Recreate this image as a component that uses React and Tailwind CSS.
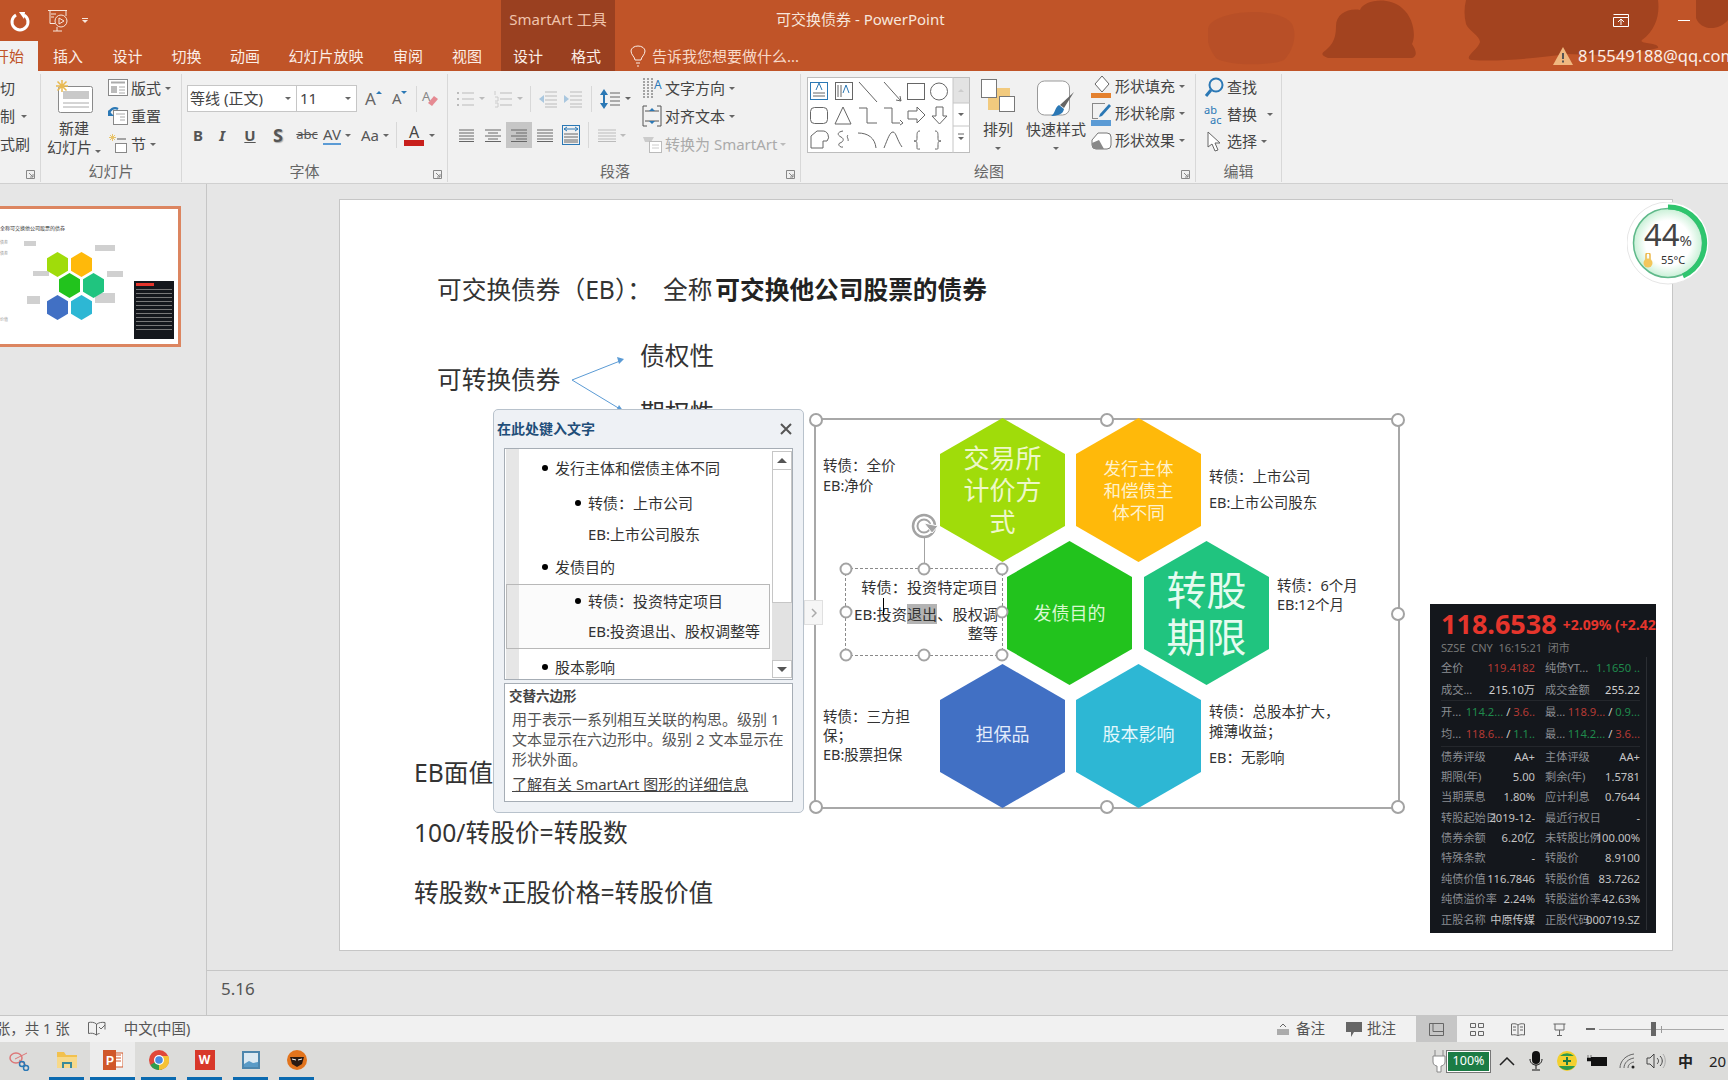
const Caret = ({ className = '' }) => (
  <span className={`inline-block h-0 w-0 border-x-[3px] border-t-[3px] border-x-transparent border-t-[#666] ${className}`} />
)

const Ico = ({ w = 20, h = 20, children, className = '' }) => (
  <svg width={w} height={h} viewBox={`0 0 ${w} ${h}`} fill="none" className={`shrink-0 ${className}`}>
    {children}
  </svg>
)

function Lines({ ys, x1 = 2, x2 = 18, color = '#666' }) {
  return ys.map((y) => <path key={y} d={`M${x1} ${y}H${x2}`} stroke={color} />)
}

function Group({ w, label, launcher, labelPad = '', children }) {
  return (
    <div className={`mt-[3px] h-[108px] shrink-0 border-r border-[#d8d8d8] ${w}`}>
      <div className="flex h-[87px]">{children}</div>
      <div className={`relative flex h-[21px] items-center justify-center text-[15px] text-[#666] ${labelPad}`}>
        {label}
        {launcher && (
          <svg width="9" height="9" viewBox="0 0 9 9" fill="none" className="absolute bottom-[3px] right-[5px]">
            <path d="M.5.5h8v8h-8zM3 3l4 4M7 4v3H4" stroke="#888" />
          </svg>
        )}
      </div>
    </div>
  )
}

const Row = ({ children, className = 'h-[28px]' }) => (
  <div className={`flex items-center whitespace-nowrap text-[15px] text-[#444] ${className}`}>{children}</div>
)

function Ribbon() {
  return (
    <div className="flex h-[113px] shrink-0 border-b border-[#d0d0d0] bg-[#f1f1f1]">
      <Group w="w-[41px] overflow-hidden" launcher label="">
        <div className="-ml-[15px]">
          <Row>剪切</Row>
          <Row>
            复制<Caret className="ml-[6px]" />
          </Row>
          <Row>格式刷</Row>
        </div>
      </Group>

      <Group w="w-[141px]" launcher={false} label="幻灯片">
        <div className="flex w-[62px] flex-col items-center pl-[4px] pt-[6px] text-[15px] leading-[19px] text-[#444]">
          <svg width="38" height="33" viewBox="0 0 38 33" fill="none">
            <rect x="3.5" y="6.5" width="34" height="26" rx="2" fill="#fff" stroke="#8a8a8a" />
            <rect x="8" y="11" width="26" height="8" fill="#c9c9c9" />
            <path d="M8 23h26M8 27h26" stroke="#aaa" />
            <g stroke="#e9b94f" strokeWidth="1.5">
              <path d="M7 0v12M1 6h12M2.5 1.5l9 9M11.5 1.5l-9 9" />
            </g>
          </svg>
          <div className="mt-[6px]">新建</div>
          <div className="whitespace-nowrap">
            幻灯片<Caret className="ml-[3px]" />
          </div>
        </div>
        <div className="pl-[5px]">
          <Row>
            <Ico w={20} h={20} className="mr-[3px]">
              <rect x=".5" y="1.5" width="19" height="16" fill="#fff" stroke="#888" />
              <path d="M3 4.5h14" stroke="#aaa" strokeWidth="2" />
              <rect x="3" y="8" width="6" height="7" fill="#bbb" />
              <path d="M11 9h6M11 12h6M11 15h6" stroke="#aaa" />
            </Ico>
            版式<Caret className="ml-[4px]" />
          </Row>
          <Row>
            <Ico w={20} h={20} className="mr-[3px]">
              <rect x="5.5" y="4.5" width="14" height="14" fill="#fff" stroke="#888" />
              <path d="M8 8h9M12 11h5M12 14h5" stroke="#aaa" />
              <path d="M1 8a6 6 0 0 1 9-5" stroke="#2b78b5" strokeWidth="2.4" />
              <path d="M0 4v6h6z" fill="#2b78b5" />
            </Ico>
            重置
          </Row>
          <Row>
            <Ico w={20} h={20} className="mr-[3px]">
              <path d="M2 1l5 5M7 1L2 6M4.5 0v7M1 3.500h7" stroke="#e9c46a" />
              <path d="M9 5h9" stroke="#888" strokeWidth="1.5" />
              <rect x="7.500" y="9.500" width="11" height="9" fill="#fff" stroke="#888" />
            </Ico>
            节<Caret className="ml-[4px]" />
          </Row>
        </div>
      </Group>

      <Group w="w-[266px]" launcher label="字体" labelPad="pr-[20px]">
        <div className="pl-[5px] pt-[11px]">
          <div className="flex h-[27px] items-center">
            <div className="flex h-full w-[110px] items-center justify-between border border-[#c6c6c6] bg-white pl-[2px] pr-[5px] text-[15px] text-[#444]">
              等线 (正文)
              <Caret />
            </div>
            <div className="flex h-full w-[60px] items-center justify-between border border-l-0 border-[#c6c6c6] bg-white pl-[3px] pr-[5px] text-[15px] text-[#444]">
              11
              <Caret />
            </div>
            <span className="ml-[8px] text-[17px] leading-none text-[#666]">A</span>
            <span className="-mt-[12px] border-x-[3px] border-b-[3px] border-x-transparent border-b-[#2b78b5]" />
            <span className="ml-[10px] text-[15px] leading-none text-[#666]">A</span>
            <span className="-mt-[12px] border-x-[3px] border-t-[3px] border-x-transparent border-t-[#2b78b5]" />
            <span className="ml-[9px] h-[26px] w-px bg-[#d8d8d8]" />
            <Ico w={18} h={22} className="ml-[4px]">
              <text x="1" y="13" fontSize="13" fill="#888">A</text>
              <path d="M7 15l6-7 4 3-6 7z" fill="#e58a92" />
            </Ico>
          </div>
          <div className="mt-[10px] flex h-[26px] items-center text-[#555]">
            <span className="w-[22px] text-center text-[15px] font-bold">B</span>
            <span className="w-[26px] text-center text-[15px] font-bold italic">I</span>
            <span className="w-[30px] text-center text-[15px] font-bold underline">U</span>
            <span className="w-[26px] text-center text-[18px] font-bold [text-shadow:1px_1px_1px_#aaa]">S</span>
            <span className="w-[32px] text-center text-[13px] line-through">abc</span>
            <span className="flex w-[37px] items-center">
              <span className="border-b-2 border-[#5b9bd5] text-[15px] leading-[17px]">AV</span>
              <Caret className="ml-[4px]" />
            </span>
            <span className="flex w-[36px] items-center pl-[1px] text-[15px]">
              Aa
              <Caret className="ml-[4px]" />
            </span>
            <span className="h-[26px] w-px bg-[#d8d8d8]" />
            <span className="ml-[7px] flex w-[20px] flex-col items-center">
              <span className="text-[16px] leading-[16px] text-[#444]">A</span>
              <span className="h-[6px] w-[20px] bg-[#c8201c]" />
            </span>
            <Caret className="ml-[5px]" />
          </div>
        </div>
      </Group>

      <Group w="w-[353px]" launcher label="段落" labelPad="pr-[18px]">
        <div className="w-[186px] pl-[8px] pt-[11px]">
          <div className="flex h-[27px] items-center">
            <Ico w={18} h={18}>
              <Lines ys={[3, 9, 15]} x1={6} x2={18} color="#bbb" />
              <path d="M1 3h2M1 9h2M1 15h2" stroke="#bbb" strokeWidth="2" />
            </Ico>
            <Caret className="ml-[5px] border-t-[#bbb]" />
            <Ico w={18} h={18} className="ml-[9px]">
              <Lines ys={[3, 9, 15]} x1={6} x2={18} color="#bbb" />
              <path d="M1 1v4M1 7h3v4H1M1 13h3v4H1" stroke="#ccc" />
            </Ico>
            <Caret className="ml-[5px] border-t-[#bbb]" />
            <span className="ml-[7px] h-[26px] w-px bg-[#d8d8d8]" />
            <Ico w={20} h={18} className="ml-[7px]">
              <Lines ys={[2, 6, 10, 14, 17]} x1={7} x2={19} color="#bbb" />
              <path d="M1 9l5-4v8z" fill="#a9c7df" />
            </Ico>
            <Ico w={20} h={18} className="ml-[5px]">
              <Lines ys={[2, 6, 10, 14, 17]} x1={7} x2={19} color="#bbb" />
              <path d="M6 9L1 5v8z" fill="#a9c7df" />
            </Ico>
            <span className="ml-[8px] h-[26px] w-px bg-[#d8d8d8]" />
            <Ico w={20} h={20} className="ml-[8px]">
              <path d="M4 2v16" stroke="#2b78b5" strokeWidth="2" />
              <path d="M4 0l4 6H0zM4 20l4-6H0z" fill="#2b78b5" />
              <Lines ys={[4, 8, 12, 16]} x1={10} x2={20} color="#666" />
            </Ico>
            <Caret className="ml-[5px]" />
          </div>
          <div className="-ml-[2px] mt-[10px] flex h-[26px] items-center">
            <div className="flex w-[26px] justify-center">
              <Ico w={16} h={13}><Lines ys={[1, 4, 7, 10, 12.500]} x1={0} x2={15} /></Ico>
            </div>
            <div className="flex w-[26px] justify-center">
              <Ico w={16} h={13}><Lines ys={[1, 7, 12.500]} x1={0} x2={16} /><Lines ys={[4, 10]} x1={3} x2={13} /></Ico>
            </div>
            <div className="flex h-[26px] w-[26px] items-center justify-center bg-[#c6c6c6]">
              <Ico w={16} h={13}><Lines ys={[1, 7, 12.500]} x1={0} x2={16} /><Lines ys={[4, 10]} x1={5} x2={16} /></Ico>
            </div>
            <div className="flex w-[26px] justify-center">
              <Ico w={16} h={13}><Lines ys={[1, 4, 7, 10, 12.500]} x1={0} x2={16} /></Ico>
            </div>
            <div className="flex w-[26px] justify-center">
              <Ico w={18} h={20}>
                <rect x=".5" y=".5" width="17" height="19" stroke="#2b78b5" />
                <path d="M2 4h14M5 2L2 4l3 2M13 2l3 2-3 2" stroke="#2b78b5" />
                <Lines ys={[9, 12, 15, 17]} x1={2} x2={16} />
              </Ico>
            </div>
            <span className="ml-[4px] h-[26px] w-px bg-[#d8d8d8]" />
            <Ico w={18} h={13} className="ml-[9px]"><Lines ys={[1, 4, 7, 10, 12.500]} x1={0} x2={18} color="#bbb" /></Ico>
            <Caret className="ml-[4px] border-t-[#bbb]" />
          </div>
        </div>
        <div className="pl-[8px]">
          <Row>
            <Ico w={20} h={24} className="mr-[3px]">
              <path d="M2 2v20M6 2v20M10 2v20" stroke="#555" strokeDasharray="2 1" />
              <text x="12" y="13" fontSize="12" fill="#2b78b5">A</text>
            </Ico>
            文字方向<Caret className="ml-[4px]" />
          </Row>
          <Row>
            <Ico w={20} h={22} className="mr-[3px]">
              <path d="M5 1H1v20h4M15 1h4v20h-4M3 6h14M3 16h14" stroke="#555" />
              <path d="M10 3l3 3H7zM10 19l3-3H7z" fill="#2b78b5" />
            </Ico>
            对齐文本<Caret className="ml-[4px]" />
          </Row>
          <Row className="h-[28px] text-[#aaa]!">
            <Ico w={20} h={18} className="mr-[3px]">
              <path d="M1 2h11l-3 5H3z" fill="#ccc" />
              <rect x="7.500" y="6.500" width="12" height="11" fill="#fff" stroke="#bbb" />
              <path d="M10 10h7M10 13h7" stroke="#ccc" />
            </Ico>
            转换为 SmartArt<Caret className="ml-[3px] border-t-[#bbb]" />
          </Row>
        </div>
      </Group>

      <Group w="w-[395px]" launcher label="绘图" labelPad="pr-[18px]">
        <div className="flex pl-[6px] pt-[3px]">
          <svg width="163" height="76" viewBox="0 0 163 76" fill="none" className="shrink-0">
            <rect x=".5" y=".5" width="162" height="75" fill="#fff" stroke="#bdbdbd" />
            <rect x="146" y="1" width="16" height="25" fill="#e3e3e3" />
            <path d="M146 0v76M146 26h17M146 49h17" stroke="#c6c6c6" />
            <path d="M154 12l3 3h-6z" fill="#ccc" />
            <path d="M151 36h6l-3 3zM151 60h6l-3 3z" fill="#666" />
            <path d="M151 57h6" stroke="#666" />
            <g stroke="#666">
              <rect x="3.500" y="5.500" width="17" height="17" stroke="#2b78b5" />
              <path d="M6 16h12M6 19h12" />
              <path d="M9 13l3-7 3 7" stroke="#2b78b5" />
              <rect x="28.500" y="5.500" width="17" height="17" />
              <path d="M31 8v12M34 8v12" />
              <path d="M36 16l3-8 3 8" stroke="#2b78b5" />
              <path d="M52 5l18 20M77 5l17 19" />
              <path d="M94 24l-5-1M94 24l-1-5" />
              <rect x="100.500" y="6.500" width="17" height="16" />
              <circle cx="132" cy="14.500" r="8.500" />
              <rect x="3.500" y="30.500" width="17" height="16" rx="4" />
              <path d="M28 47l8-17 8 17z" />
              <path d="M52 31h8v15h10M77 31h8v15h8M93 43l3 3-3 2" />
              <path d="M101 34h9v-4l8 8-8 8v-4h-9zM129 30h7v9h4l-7.500 8-7.500-8h4z" />
              <path d="M4 71V59l6-5h5a6 6 0 0 1 5 10h-4v7z" />
              <path d="M36 54c-6 1-6 4-2 6s2 5-1 6 0 5 3 4M41 58c-2 2 1 4 0 6" />
              <path d="M51 56c10 0 17 5 18 15M77 71c4-10 6-16 9-16s4 8 9 15" />
              <path d="M113 54c-3 0-3 2-3 6s0 4-3 4c3 0 3 1 3 5s0 3 3 3M128 54c3 0 3 2 3 6s0 4 3 4c-3 0-3 1-3 5s0 3-3 3" />
            </g>
          </svg>
          <div className="flex w-[56px] flex-col items-center pt-[1px] text-[15px] leading-[19px] text-[#444]">
            <svg width="36" height="36" viewBox="0 0 36 36" fill="none">
              <rect x="8" y="10" width="22" height="22" fill="#f2ca7e" />
              <rect x="1.500" y="1.500" width="15" height="18" fill="#fff" stroke="#777" />
              <rect x="19.500" y="18.500" width="15" height="15" fill="#fff" stroke="#777" />
            </svg>
            <div className="mt-[6px]">排列</div>
            <Caret className="mt-[8px]" />
          </div>
          <div className="flex w-[60px] flex-col items-center pt-[3px] text-[15px] leading-[19px] text-[#444]">
            <svg width="40" height="38" viewBox="0 0 40 38" fill="none">
              <rect x="1.500" y="1" width="32" height="34" rx="7" fill="#fff" stroke="#999" />
              <path d="M38 12l-10 16-4-3z" fill="#666" />
              <path d="M23 25l5 4c-1 6-8 7-13 7 4-2 4-9 8-11z" fill="#2b78b5" />
            </svg>
            <div className="mt-[2px] whitespace-nowrap">快速样式</div>
            <Caret className="mt-[8px]" />
          </div>
          <div className="-mt-[4px] pl-[5px]">
            <Row className="h-[27px]">
              <Ico w={21} h={24} className="mr-[3px]">
                <path d="M11 1l7 8-7 8-7-8z" fill="#fff" stroke="#666" />
                <rect x="0" y="18" width="20" height="5" fill="#e4812f" />
              </Ico>
              形状填充<Caret className="ml-[4px]" />
            </Row>
            <Row className="h-[27px]">
              <Ico w={21} h={24} className="mr-[3px]">
                <path d="M1 1.500h13M1.500 1v16M1 16.500h6" stroke="#888" />
                <path d="M18 2l2 2-9 10-3 1 1-3z" fill="#2b78b5" />
                <rect x="0" y="18" width="20" height="6" fill="#5b9bd5" />
              </Ico>
              形状轮廓<Caret className="ml-[4px]" />
            </Row>
            <Row className="h-[27px]">
              <Ico w={21} h={20} className="mr-[3px]">
                <path d="M7 2h9a4 4 0 0 1 4 4v8a4 4 0 0 1-4 4H5a4 4 0 0 1-4-4V9z" fill="#fff" stroke="#777" />
                <path d="M1 12l7-3 5 9H5c-3 0-4-2-4-6z" fill="#888" />
              </Ico>
              形状效果<Caret className="ml-[4px]" />
            </Row>
          </div>
        </div>
      </Group>

      <Group w="w-[86px]" label="编辑">
        <div className="pl-[8px]">
          <Row className="h-[27px]">
            <Ico w={20} h={22} className="mr-[3px]">
              <circle cx="12" cy="8" r="6.500" stroke="#2b78b5" strokeWidth="2" />
              <path d="M7 13l-5 6" stroke="#2b78b5" strokeWidth="3" />
            </Ico>
            查找
          </Row>
          <Row className="h-[27px]">
            <span className="mr-[4px] w-[19px] text-[11px] leading-[10px] text-[#2b78b5]">
              ab
              <br />
              <span className="pl-[6px]">ac</span>
            </span>
            替换<Caret className="ml-[10px]" />
          </Row>
          <Row className="h-[27px]">
            <Ico w={20} h={22} className="mr-[3px]">
              <path d="M4 1v15l4-3 3 7 3-1-3-7h5z" fill="#fff" stroke="#666" />
            </Ico>
            选择<Caret className="ml-[4px]" />
          </Row>
        </div>
      </Group>
    </div>
  )
}

function Header() {
  const tabs = [
    ['插入', 'w-[60px]'],
    ['设计', 'w-[59px]'],
    ['切换', 'w-[59px]'],
    ['动画', 'w-[58px]'],
    ['幻灯片放映', 'w-[104px]'],
    ['审阅', 'w-[60px]'],
    ['视图', 'w-[63px] pr-[5px]'],
  ]
  return (
    <div className="relative h-[71px] shrink-0 overflow-hidden bg-[#c05428] text-white">
      <svg width="520" height="71" viewBox="0 0 520 71" className="absolute right-0 top-0" fill="#a3431f">
        <path d="M0 20c12-14 70-18 82 0 6 12 0 28-8 36-12 6-58 6-68-2C-2 44-6 30 0 20z" fill="#b34c26" opacity=".6" transform="translate(2 4)" />
        <path d="M128 26c0-12 12-18 24-16 4-10 28-14 42-2 12 10 14 28 10 36 4 6 6 12 0 14H120c-6-2-8-4-2-8 4-4 10-8 10-24z" />
        <path d="M258 0h192c2 14-2 30-16 40-4 4 18 2 16 8-20 6-60 8-90 6-30 4-70 8-96 6-10-2 6-10 8-18 0-6-12-12-14-18-2-8-2-16 0-24z" />
        <path d="M488 0h32v20c-10 12-28 10-32-2z" />
      </svg>
      <div className="relative flex h-[41px] items-center">
        <div className="flex h-full w-[501px] items-center">
          <svg width="22" height="22" viewBox="0 0 22 22" fill="none" className="ml-[9px]">
            <path d="M7 5a8 8 0 1 0 8 0" stroke="#fff" strokeWidth="3" />
            <path d="M10 2l6 0-1 7z" fill="#fff" />
          </svg>
          <svg width="22" height="24" viewBox="0 0 22 24" fill="none" stroke="#f7e6dc" className="ml-[16px]">
            <path d="M1 1.500h19M3 1.500v13h5M19 1.500V7M4 5h5M4 8h3" />
            <circle cx="14" cy="12" r="6" />
            <path d="M12 9l5 3-5 3zM6 22h9M10 18v4" />
          </svg>
          <span className="ml-[13px] flex flex-col items-center gap-[1px]">
            <span className="h-px w-[6px] bg-[#f7e6dc]" />
            <Caret className="border-t-[#f7e6dc]" />
          </span>
        </div>
        <div className="flex h-full w-[114px] items-center justify-center bg-[#9a4020] pb-[2px] text-[15px] text-[#f0c4ac]">
          SmartArt 工具
        </div>
        <div className="pb-[2px] pl-[161px] text-[15px] text-[#f7e6dc]">可交换债券 - PowerPoint</div>
        <div className="ml-auto flex items-center pr-[38px]">
          <svg width="16" height="13" viewBox="0 0 16 13" fill="none" stroke="#fff">
            <path d="M.5 3.500h15v9H.5zM.5.500h15v3M8 11V5M5 8l3-3 3 3" />
          </svg>
          <span className="ml-[49px] h-px w-[12px] bg-white" />
        </div>
      </div>
      <div className="relative flex h-[30px] items-center text-[15px]">
        <div className="flex h-full w-[38px] items-center justify-end overflow-hidden whitespace-nowrap bg-[#f1f1f1] pr-[14px] text-[#c05428]">
          开始
        </div>
        {tabs.map(([t, w]) => (
          <div key={t} className={`flex h-full items-center justify-center text-[#fbeee7] ${w}`}>
            {t}
          </div>
        ))}
        <div className="flex h-full w-[114px] items-center bg-[#9a4020] pl-[12px] text-[#fbeee7]">
          <span>设计</span>
          <span className="ml-[28px]">格式</span>
        </div>
        <svg width="16" height="22" viewBox="0 0 16 22" fill="none" stroke="#fbeee7" className="ml-[15px]">
          <path d="M5 15c0-3-4-5-4-9a7 5 0 0 1 14 0c0 4-4 6-4 9zM6 18h4M7 21h2" />
        </svg>
        <span className="ml-[6px] text-[#f7d9c9]">告诉我您想要做什么...</span>
        <div className="ml-auto flex items-center">
          <svg width="20" height="18" viewBox="0 0 20 18">
            <path d="M10 0l10 18H0z" fill="#f0b880" />
            <path d="M10 6v6M10 13.500v2" stroke="#555" strokeWidth="2" />
          </svg>
          <span className="ml-[5px] w-[150px] overflow-hidden whitespace-nowrap text-[16.5px] text-[#fbeee7]">815549188@qq.com</span>
        </div>
      </div>
    </div>
  )
}

function Hex({ pos, color, lines, text }) {
  return (
    <div
      className={`absolute flex h-[144px] w-[125px] flex-col items-center justify-center text-center [clip-path:polygon(50%_0,100%_25%,100%_75%,50%_100%,0_75%,0_25%)] ${pos} ${color} ${text}`}
    >
      {lines.map((l) => (
        <div key={l} className="whitespace-nowrap">
          {l}
        </div>
      ))}
    </div>
  )
}

const Handle = ({ pos, size = 'h-[14px] w-[14px]' }) => (
  <span className={`absolute -translate-x-1/2 -translate-y-1/2 rounded-full border-2 border-[#a3a3a3] bg-white ${size} ${pos}`} />
)

function SmartArt() {
  const side = 'absolute whitespace-nowrap text-[14.5px] text-[#333]'
  const small = 'h-[13px] w-[13px]'
  return (
    <div className="absolute left-[474px] top-[218px] h-[391px] w-[586px] border-2 border-[#a8a8a8]">
      <Hex pos="left-[124px] -top-[2px]" color="bg-[#a0dc0a]" lines={['交易所', '计价方', '式']} text="text-[26px] leading-[32px] text-[#eef8c8]" />
      <Hex pos="left-[260px] -top-[2px]" color="bg-[#ffb90a]" lines={['发行主体', '和偿债主', '体不同']} text="text-[17.500px] leading-[22px] text-[#fff2cc]" />
      <Hex pos="left-[191px] top-[121px]" color="bg-[#22c31d]" lines={['发债目的']} text="text-[18px] text-[#d8f8d0]" />
      <Hex pos="left-[328px] top-[121px]" color="bg-[#20c47f]" lines={['转股', '期限']} text="text-[40px] leading-[47px] text-[#e6fbf0]" />
      <Hex pos="left-[124px] top-[244px]" color="bg-[#4170c4]" lines={['担保品']} text="pb-[3px] text-[18px] text-[#e3ecfb]" />
      <Hex pos="left-[260px] top-[244px]" color="bg-[#2db7d4]" lines={['股本影响']} text="pb-[3px] text-[18px] text-[#e3f8fc]" />

      <div className={`left-[7px] top-[35px] leading-[20px] ${side}`}>
        转债：全价
        <br />
        EB:净价
      </div>
      <div className={`left-[393px] top-[43px] leading-[26px] ${side}`}>
        转债：上市公司
        <br />
        EB:上市公司股东
      </div>
      <div className={`left-[461px] top-[156px] leading-[19px] ${side}`}>
        转债：6个月
        <br />
        EB:12个月
      </div>
      <div className={`left-[7px] top-[287px] leading-[19px] ${side}`}>
        转债：三方担
        <br />
        保；
        <br />
        EB:股票担保
      </div>
      <div className={`left-[393px] top-[282px] leading-[19.500px] ${side}`}>
        转债：总股本扩大，
        <br />
        摊薄收益；
        <div className="mt-[7px]">EB：无影响</div>
      </div>

      <div className="absolute left-[29px] top-[148px] h-[88px] w-[158px] border border-dashed border-[#8a8a8a]">
        <div className="pr-[4px] pt-[8px] text-right text-[15.200px] leading-[20px] text-[#333]">
          <div className="whitespace-nowrap">转债：投资特定项目</div>
          <div className="mt-[7px] whitespace-nowrap">
            EB:投资<span className="bg-[#b3b3b3]">退出</span>、股权调
          </div>
          <div className="leading-[19px]">整等</div>
        </div>
        <span className="absolute left-[37px] top-[29px] h-[17px] w-px bg-black" />
        <span className="absolute -top-[33px] left-1/2 h-[33px] w-px bg-[#a3a3a3]" />
        <svg width="30" height="28" viewBox="0 0 30 28" fill="none" className="absolute -top-[57px] left-[64px]">
          <circle cx="14" cy="14" r="11" stroke="#a3a3a3" strokeWidth="2.500" />
          <circle cx="14" cy="14" r="6.500" stroke="#a3a3a3" strokeWidth="2" />
          <path d="M14 11l14 3-6 7z" fill="#a3a3a3" stroke="#fff" />
        </svg>
        <Handle size={small} pos="left-0 top-0" />
        <Handle size={small} pos="left-1/2 top-0" />
        <Handle size={small} pos="left-full top-0" />
        <Handle size={small} pos="left-0 top-1/2" />
        <Handle size={small} pos="left-full top-1/2" />
        <Handle size={small} pos="left-0 top-full" />
        <Handle size={small} pos="left-1/2 top-full" />
        <Handle size={small} pos="left-full top-full" />
      </div>

      <Handle pos="left-0 top-0" />
      <Handle pos="left-1/2 top-0" />
      <Handle pos="left-full top-0" />
      <Handle pos="left-0 top-1/2" />
      <Handle pos="left-full top-1/2" />
      <Handle pos="left-0 top-full" />
      <Handle pos="left-1/2 top-full" />
      <Handle pos="left-full top-full" />
    </div>
  )
}

function PaneRow({ level, children, className = '' }) {
  return (
    <div className={`flex h-[30px] shrink-0 items-center whitespace-nowrap text-[15px] text-[#333] ${level === 1 ? 'pl-[23px]' : 'pl-[56px]'} ${className}`}>
      <span className="mr-[7px] h-[6px] w-[6px] rounded-full bg-black" />
      {children}
    </div>
  )
}

function TextPane() {
  return (
    <div className="absolute left-[153px] top-[209px] h-[404px] w-[311px] rounded-[5px] border border-[#b8c2cc] bg-[#eef1f5]">
      <div className="flex h-[38px] items-center justify-between pb-[1px] pl-[3px] pr-[11px]">
        <span className="text-[14px] font-bold text-[#1f4e79]">在此处键入文字</span>
        <svg width="12" height="12" viewBox="0 0 12 12" stroke="#555" strokeWidth="2">
          <path d="M1 1l10 10M11 1L1 11" />
        </svg>
      </div>
      <div className="mx-[10px] flex h-[232px] overflow-hidden border border-[#a6adb5] bg-white">
        <div className="h-full w-[267px] shrink-0 overflow-hidden pl-[1px]">
          <div className="h-full border-l-[13px] border-[#e6e6e6] pt-[4px]">
            <PaneRow level={1}>发行主体和偿债主体不同</PaneRow>
            <PaneRow level={2} className="mt-[5px]">转债：上市公司</PaneRow>
            <div className="mt-[1px] flex h-[30px] items-center pl-[69px] text-[15px] text-[#333]">EB:上市公司股东</div>
            <PaneRow level={1} className="mt-[3px]">发债目的</PaneRow>
            <div className="-ml-[13px] mt-[2px] h-[65px] w-[264px] border border-[#b8b8b8]">
              <div className="h-full border-l-[12px] border-[#e6e6e6] bg-[#fbfbfb] pt-[1px]">
                <PaneRow level={2}>转债：投资特定项目</PaneRow>
                <div className="flex h-[30px] items-center whitespace-nowrap pl-[69px] text-[15px] text-[#333]">EB:投资退出、股权调整等</div>
              </div>
            </div>
            <PaneRow level={1} className="mt-[3px]">股本影响</PaneRow>
          </div>
        </div>
        <div className="mt-[2px] flex h-[227px] w-[20px] flex-col">
          <div className="flex h-[19px] items-center justify-center border border-[#c6c6c6]">
            <span className="border-x-[5px] border-b-[5px] border-x-transparent border-b-[#555]" />
          </div>
          <div className="h-[133px] border border-t-0 border-[#c6c6c6]" />
          <div className="flex-1 bg-[#e2e2e2]" />
          <div className="flex h-[18px] items-center justify-center border border-[#c6c6c6]">
            <span className="border-x-[5px] border-t-[5px] border-x-transparent border-t-[#555]" />
          </div>
        </div>
      </div>
      <div className="mx-[10px] mt-[3px] h-[119px] whitespace-nowrap border border-[#a6adb5] bg-white pl-[4px] pt-[3px]">
        <div className="text-[13.500px] font-bold leading-[19px] text-[#444]">交替六边形</div>
        <div className="mt-[3px] pl-[3px] text-[15px] leading-[20px] text-[#555]">
          用于表示一系列相互关联的构思。级别 1
          <br />
          文本显示在六边形中。级别 2 文本显示在
          <br />
          形状外面。
        </div>
        <div className="mt-[5px] pl-[3px] text-[15px] leading-[20px] text-[#444] underline">了解有关 SmartArt 图形的详细信息</div>
      </div>
    </div>
  )
}

const R = 'text-[#b53a34]'
const G = 'text-[#1f8a4c]'
const stockRows = [
  ['全价', [['119.4182', R]], '纯债YT...', [['1.1650 ..', G]]],
  ['成交...', [['215.10万', 'text-[#d0d0d0]']], '成交金额', [['255.22', 'text-[#d0d0d0]']]],
  ['开...', [['114.2...', G], [' / ', 'text-[#ccc]'], ['3.6..', R]], '最...', [['118.9...', R], [' / ', 'text-[#ccc]'], ['0.9...', G]]],
  ['均...', [['118.6...', R], [' / ', 'text-[#ccc]'], ['1.1..', G]], '最...', [['114.2...', G], [' / ', 'text-[#ccc]'], ['3.6...', R]]],
  ['债券评级', 'AA+', '主体评级', 'AA+'],
  ['期限(年)', '5.00', '剩余(年)', '1.5781'],
  ['当期票息', '1.80%', '应计利息', '0.7644'],
  ['转股起始日', '2019-12-', '最近行权日', '-'],
  ['债券余额', '6.20亿', '未转股比例', '100.00%'],
  ['特殊条款', '-', '转股价', '8.9100'],
  ['纯债价值', '116.7846', '转股价值', '83.7262'],
  ['纯债溢价率', '2.24%', '转股溢价率', '42.63%'],
  ['正股名称', '中原传媒', '正股代码', '000719.SZ'],
]

function StockValue({ v }) {
  if (typeof v === 'string') return <span className="shrink-0 text-[#c4c4c4]">{v}</span>
  return (
    <span className="shrink-0 whitespace-pre">
      {v.map(([t, c], i) => (
        <span key={i} className={c}>
          {t}
        </span>
      ))}
    </span>
  )
}

function StockCard() {
  return (
    <div className="absolute left-[1090px] top-[404px] h-[329px] w-[226px] overflow-hidden bg-[#14171c] pl-[11px] pt-[5px]">
      <div className="flex h-[30px] items-center whitespace-nowrap font-bold text-[#e5352c]">
        <span className="text-[27px]">118.6538</span>
        <span className="ml-[6px] text-[14px]">+2.09% (+2.42</span>
      </div>
      <div className="mt-[2px] h-[14px] whitespace-nowrap text-[11px] leading-[14px] text-[#777]">SZSE&nbsp; CNY&nbsp; 16:15:21&nbsp; 闭市</div>
      <div className="mt-[2px] w-[206px] border-r border-[#2b2e33] pr-[6px]">
        {stockRows.map(([a, av, b, bv], i) => (
          <div
            key={a + i}
            className={`grid grid-cols-[94px_95px] gap-x-[10px] whitespace-nowrap text-[11.200px] ${i < 3 ? 'h-[22px] leading-[22px]' : i === 3 ? 'h-[23.500px] border-b border-[#24272c] leading-[22px]' : 'h-[20.400px] leading-[20.400px]'} ${i === 1 ? 'border-b border-[#24272c]' : ''}`}
          >
            <div className="flex min-w-0 justify-between">
              <span className="min-w-0 text-[#8a8d92]">{a}</span>
              <StockValue v={av} />
            </div>
            <div className="flex min-w-0 justify-between">
              <span className="min-w-0 text-[#8a8d92]">{b}</span>
              <StockValue v={bv} />
            </div>
          </div>
        ))}
      </div>
    </div>
  )
}

function Slide() {
  const body = 'absolute whitespace-nowrap text-[24.700px] leading-[36px] text-[#333]'
  return (
    <div className="relative h-[752px] w-[1334px] border border-[#c6c6c6] bg-white">
      <div className={`left-[97px] top-[72px] ${body}`}>
        可交换债券（EB）：<span className="ml-[11px]">全称</span>
        <b className="ml-[3px] text-[#222]">可交换他公司股票的债券</b>
      </div>
      <div className={`left-[97px] top-[162px] ${body}`}>可转换债券</div>
      <svg width="60" height="70" viewBox="0 0 60 70" fill="none" className="absolute left-[230px] top-[150px]">
        <path d="M2 30l48-19M2 30l48 29" stroke="#5b9bd5" />
        <path d="M54 9l-7-2 2 7zM54 62l-8-1 3-6z" fill="#5b9bd5" />
      </svg>
      <div className={`left-[300px] top-[138px] ${body}`}>债权性</div>
      <div className={`left-[300px] top-[195px] ${body}`}>期权性</div>
      <div className={`left-[74px] top-[555px] ${body}`}>EB面值</div>
      <div className={`left-[74px] top-[615px] ${body}`}>100/转股价=转股数</div>
      <div className={`left-[74px] top-[675px] ${body}`}>转股数*正股价格=转股价值</div>
      <SmartArt />
      <TextPane />
      <div className="absolute left-[464px] top-[400px] flex h-[25px] w-[19px] items-center justify-center border border-[#e0e0e0] bg-[#f6f6f6]">
        <svg width="6" height="10" viewBox="0 0 6 10" fill="none" stroke="#aaa" strokeWidth="1.500">
          <path d="M1 1l4 4-4 4" />
        </svg>
      </div>
      <StockCard />
    </div>
  )
}

function MiniHex({ pos, color }) {
  return <div className={`absolute h-[25px] w-[21px] [clip-path:polygon(50%_0,100%_25%,100%_75%,50%_100%,0_75%,0_25%)] ${pos} ${color}`} />
}

function Thumbnail() {
  return (
    <div className="relative mt-[22px] h-[141px] w-[181px] overflow-hidden border-[3.500px] border-l-0 border-[#dc8560] bg-white">
      <div className="absolute left-0 top-[16px] whitespace-nowrap text-[5px] leading-[7px] text-[#333]">全称可交换他公司股票的债券</div>
      <div className="absolute left-0 top-[31px] text-[4px] leading-[6px] text-[#999]">债券</div>
      <div className="absolute left-0 top-[42px] text-[4px] leading-[6px] text-[#999]">债券</div>
      <div className="absolute left-[24px] top-[32px] h-[5px] w-[12px] bg-[#d0d0d0]" />
      <div className="absolute left-[95px] top-[36px] h-[6px] w-[20px] bg-[#d0d0d0]" />
      <div className="absolute left-[107px] top-[62px] h-[6px] w-[16px] bg-[#d0d0d0]" />
      <div className="absolute left-[33px] top-[62px] h-[5px] w-[16px] bg-[#d0d0d0]" />
      <div className="absolute left-[27px] top-[87px] h-[8px] w-[13px] bg-[#d0d0d0]" />
      <div className="absolute left-[95px] top-[84px] h-[10px] w-[20px] bg-[#d0d0d0]" />
      <MiniHex pos="left-[47px] top-[43px]" color="bg-[#a0dc0a]" />
      <MiniHex pos="left-[71px] top-[43px]" color="bg-[#ffb90a]" />
      <MiniHex pos="left-[59px] top-[64px]" color="bg-[#22c31d]" />
      <MiniHex pos="left-[83px] top-[64px]" color="bg-[#20c47f]" />
      <MiniHex pos="left-[47px] top-[86px]" color="bg-[#4170c4]" />
      <MiniHex pos="left-[71px] top-[86px]" color="bg-[#2db7d4]" />
      <div className="absolute left-[134px] top-[72px] h-[58px] w-[40px] bg-[#14171c] px-[2px] pt-[2px]">
        <div className="h-[3px] w-[18px] bg-[#e5352c]" />
        <div className="mt-[3px] h-[44px] bg-[repeating-linear-gradient(180deg,#777_0_1px,transparent_1px_4px)]" />
      </div>
      <div className="absolute left-0 top-[108px] text-[4px] text-[#999]">价值</div>
    </div>
  )
}

function StatusBar() {
  return (
    <div className="flex h-[27px] shrink-0 items-center overflow-hidden border-t border-[#c6c6c6] bg-[#f1f1f1] text-[14.500px] text-[#555]">
      <span className="-ml-[27px] whitespace-nowrap">第1张，共 1 张</span>
      <svg width="18" height="16" viewBox="0 0 18 16" fill="none" stroke="#666" className="ml-[18px]">
        <path d="M8.500 3C6 1 3 1 .5 1.500v11c3-.5 5-.5 8 1.500 1-1 2-1.500 3-1.500M8.500 3v11M9 3c2-1.500 5-2 8-1.500v7" />
        <path d="M11 6l2 2 4-4" />
      </svg>
      <span className="ml-[18px]">中文(中国)</span>
      <div className="ml-auto flex h-full items-center">
        <svg width="14" height="12" viewBox="0 0 14 12" fill="none" stroke="#666" className="mr-[6px]">
          <path d="M1 7h12M1 9h12M1 11h12M4 4l3-3 3 3" />
        </svg>
        <span>备注</span>
        <svg width="16" height="15" viewBox="0 0 16 15" fill="#666" className="ml-[21px] mr-[5px]">
          <path d="M0 0h16v10H8l-3 5v-5H0z" />
        </svg>
        <span>批注</span>
        <div className="ml-[20px] flex h-full w-[41px] items-center justify-center bg-[#c6c6c6]">
          <svg width="15" height="13" viewBox="0 0 15 13" fill="none" stroke="#666">
            <path d="M.5.500h14v12H.5zM4 .500v8h10" />
          </svg>
        </div>
        <svg width="14" height="13" viewBox="0 0 14 13" fill="none" stroke="#666" className="ml-[13px]">
          <path d="M.5.500h5v4h-5zM8.500.500h5v4h-5zM.5 8.500h5v4h-5zM8.500 8.500h5v4h-5z" />
        </svg>
        <svg width="14" height="13" viewBox="0 0 14 13" fill="none" stroke="#666" className="ml-[27px]">
          <path d="M7 2C5 .5 3 .5.500 1v11c3-.5 4.500-.5 6.500 1 2-1.500 3.500-1.500 6.500-1V1C11 .5 9 .5 7 2zM7 2v11M2 4h3M2 7h3M9 4h3M9 7h3" />
        </svg>
        <svg width="13" height="13" viewBox="0 0 13 13" fill="none" stroke="#666" className="ml-[28px]">
          <path d="M.5 1h12M2 1v6h9V1M6.500 7v5M4 12.500h5" />
        </svg>
        <span className="ml-[20px] h-[2px] w-[9px] bg-[#666]" />
        <div className="relative ml-[4px] mr-[4px] h-px w-[125px] bg-[#aaa]">
          <span className="absolute left-[52px] top-[-7px] h-[14px] w-[5px] bg-[#666]" />
          <span className="absolute left-[62px] top-[-3px] h-[7px] w-px bg-[#999]" />
        </div>
      </div>
    </div>
  )
}

function TaskItem({ w = 'w-[35px]', active, children }) {
  return (
    <div className={`flex h-full shrink-0 items-center justify-center border-b-[3px] border-[#0b6ab0] ${w} ${active ? 'bg-[#ececec]' : ''}`}>
      {children}
    </div>
  )
}

function Taskbar() {
  return (
    <div className="flex h-[38px] shrink-0 items-center overflow-hidden bg-[#dcdcda]">
      <svg width="22" height="20" viewBox="0 0 22 20" fill="none" className="absolute ml-[9px]">
        <ellipse cx="7" cy="7" rx="6" ry="5" stroke="#d77" strokeWidth="1.500" />
        <path d="M6 8l12-6M10 9l7 5" stroke="#d77" />
        <circle cx="13" cy="13" r="2.500" stroke="#2b78b5" strokeWidth="1.500" />
        <circle cx="17" cy="17" r="2.500" stroke="#2b78b5" strokeWidth="1.500" />
      </svg>
      <div className="ml-[49px] flex h-full gap-[6px]">
        <TaskItem>
          <svg width="20" height="18" viewBox="0 0 20 18">
            <path d="M0 1h7l2 3h11v5H0z" fill="#f2c14e" />
            <rect y="6" width="20" height="11" fill="#f7d98a" />
            <path d="M5 11h10v6h-2v-4H7v4H5z" fill="#3a8a9a" />
          </svg>
        </TaskItem>
        <TaskItem w="w-[45px]" active>
          <svg width="20" height="20" viewBox="0 0 20 20">
            <rect x="6" y="3" width="14" height="14" fill="#fff" stroke="#d0572a" />
            <rect y="0" width="13" height="20" fill="#d0572a" />
            <path d="M13 5h5M13 8h5M13 11h5" stroke="#d0572a" />
            <text x="3" y="15" fontSize="12" fontWeight="bold" fill="#fff" fontFamily="Liberation Sans">P</text>
          </svg>
        </TaskItem>
        <TaskItem>
          <svg width="20" height="20" viewBox="0 0 20 20">
            <circle cx="10" cy="10" r="10" fill="#e0483a" />
            <path d="M10 10L1.300 15A10 10 0 0 0 13 19.500z" fill="#2e9d4e" />
            <path d="M10 6h9.300A10 10 0 0 1 10 20z" fill="#f6c234" />
            <circle cx="10" cy="10" r="5" fill="#fff" />
            <circle cx="10" cy="10" r="3.800" fill="#4a8ae0" />
          </svg>
        </TaskItem>
        <TaskItem w="ml-[5px] w-[35px]">
          <div className="flex h-[20px] w-[20px] items-center justify-center bg-[#d8382a] text-[12px] font-bold text-white">W</div>
        </TaskItem>
        <TaskItem w="ml-[5px] w-[35px]">
          <svg width="20" height="20" viewBox="0 0 20 20">
            <rect x="2" y="2" width="16" height="16" fill="#dce9f2" stroke="#4d86ad" strokeWidth="2" />
            <path d="M3 14l5-3 4 2 5-1v5H3z" fill="#5a9bc7" />
          </svg>
        </TaskItem>
        <TaskItem w="ml-[5px] w-[35px]">
          <svg width="20" height="20" viewBox="0 0 20 20">
            <circle cx="10" cy="10" r="10" fill="#e2741d" />
            <path d="M3 7h14l-2 7-5 3-5-3z" fill="#2a1a12" />
            <path d="M5 9l4 1M15 9l-4 1" stroke="#fff" />
          </svg>
        </TaskItem>
      </div>
      <div className="ml-auto flex h-full w-[296px] items-center">
        <svg width="14" height="24" viewBox="0 0 14 24" fill="#fff" stroke="#888">
          <path d="M3 1v6M11 1v6M1 7h12v6c0 3-3 4-4 4v6H5v-6c-1 0-4-1-4-4z" />
        </svg>
        <div className="flex h-[23px] w-[45px] items-center border border-[#777] bg-white p-[1px]">
          <span className="flex h-full w-full items-center justify-center bg-[#1c7c45] text-[12.500px] text-white">100%</span>
        </div>
        <svg width="16" height="9" viewBox="0 0 16 9" fill="none" stroke="#222" strokeWidth="1.500" className="ml-[8px]">
          <path d="M1 8l7-7 7 7" />
        </svg>
        <svg width="14" height="20" viewBox="0 0 14 20" className="ml-[14px]">
          <rect x="3" y="0" width="8" height="13" rx="4" fill="#111" />
          <path d="M1 8c0 8 12 8 12 0M7 14v4M3 19h8" stroke="#111" fill="none" />
        </svg>
        <svg width="20" height="20" viewBox="0 0 20 20" className="ml-[14px]">
          <circle cx="10" cy="10" r="10" fill="#f3d02f" />
          <path d="M2 15a10 10 0 0 0 16 0zM3 5a10 10 0 0 1 14 0z" fill="#2d9a4b" />
          <path d="M10 6v8M6 10h8" stroke="#1c7c45" strokeWidth="2" />
        </svg>
        <svg width="20" height="12" viewBox="0 0 20 12" className="ml-[10px]">
          <rect x="4" y="2" width="16" height="9" fill="#111" />
          <path d="M1 0v3M4 0v3M0 3h5v3H0z" fill="#111" stroke="#111" strokeWidth=".5" />
        </svg>
        <svg width="16" height="16" viewBox="0 0 16 16" fill="none" stroke="#666" className="ml-[12px]">
          <path d="M1 15C1 8 7 2 15 1M5 15c0-5 4-9 10-10M9 15c0-3 2-5 6-6" />
          <circle cx="14" cy="14" r="1.500" fill="#222" stroke="none" />
        </svg>
        <svg width="20" height="16" viewBox="0 0 20 16" fill="none" stroke="#444" className="ml-[11px]">
          <path d="M1 5h3l4-4v14l-4-4H1zM11 5c2 2 2 4 0 6M14 3c3 3 3 7 0 10" />
          <path d="M17 1c3 4 3 10 0 14" stroke="#aaa" />
        </svg>
        <span className="ml-[12px] text-[15px] font-bold text-[#222]">中</span>
        <span className="ml-[16px] text-[15px] text-[#222]">20</span>
      </div>
    </div>
  )
}

function TempGauge() {
  return (
    <div className="absolute left-[1627px] top-[202px] h-[83px] w-[83px]">
      <svg width="83" height="83" viewBox="0 0 83 83" fill="none" className="absolute inset-0">
        <defs>
          <radialGradient id="gaugeFill" cx="50%" cy="50%" r="50%">
            <stop offset="65%" stopColor="#fff" />
            <stop offset="100%" stopColor="#c8f0d6" />
          </radialGradient>
        </defs>
        <circle cx="41" cy="41" r="41" fill="#fff" stroke="#e6e6e6" />
        <circle cx="41" cy="41" r="34.500" fill="url(#gaugeFill)" stroke="#5fb98a" strokeWidth="1.500" />
        <path d="M41 5A36 36 0 0 1 56 74" stroke="#2fc56e" strokeWidth="5" />
      </svg>
      <div className="absolute left-[17px] top-[14px] flex items-end whitespace-nowrap text-[#444]">
        <span className="text-[31px] leading-[36px]">44</span>
        <span className="mb-[2px] text-[15px] leading-[20px]">%</span>
      </div>
      <svg width="10" height="15" viewBox="0 0 10 15" className="absolute left-[16px] top-[51px]">
        <rect x="3" y="0" width="4" height="8" rx="2" fill="none" stroke="#edb84a" strokeWidth="1.500" />
        <circle cx="5" cy="10" r="4.500" fill="#f3c65a" />
      </svg>
      <span className="absolute left-[34px] top-[50px] whitespace-nowrap text-[11px] leading-[16px] text-[#333]">55°C</span>
    </div>
  )
}

export default function App() {
  return (
    <div className="relative flex h-[1080px] w-[1728px] flex-col overflow-hidden bg-[#e6e6e6] font-['Noto_Sans','Noto_Sans_CJK_SC',sans-serif]">
      <Header />
      <Ribbon />
      <div className="flex min-h-0 flex-1">
        <div className="w-[207px] shrink-0 border-r border-[#c6c6c6]">
          <Thumbnail />
        </div>
        <div className="flex min-w-0 flex-1 flex-col">
          <div className="h-[786px] shrink-0 pl-[132px] pt-[15px]">
            <Slide />
          </div>
          <div className="flex flex-1 items-center border-t border-[#c6c6c6] pb-[8px] pl-[14px] text-[17px] text-[#555]">5.16</div>
        </div>
      </div>
      <StatusBar />
      <Taskbar />
      <TempGauge />
    </div>
  )
}
